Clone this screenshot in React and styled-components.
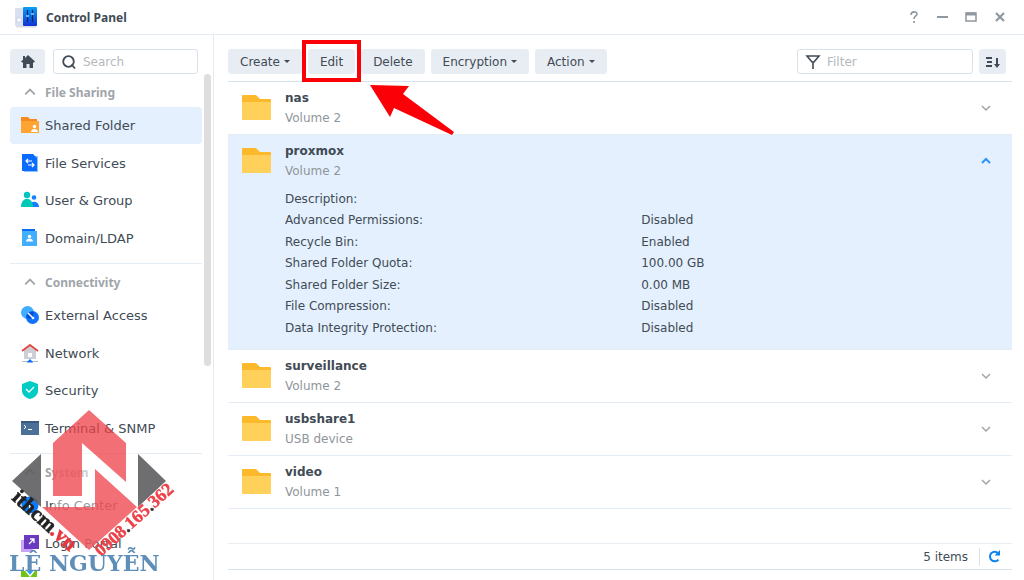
import React, { useState } from 'react';
import styled, { createGlobalStyle, css } from 'styled-components';

const GlobalStyle = createGlobalStyle`
    * { box-sizing: border-box; }
    html, body, #root { height: 100%; margin: 0; }
    body {
        font-family: Verdana, 'DejaVu Sans', sans-serif;
        font-size: 13px;
        color: #414b55;
        background: #fff;
        overflow: hidden;
    }
    button, input { font: inherit; color: inherit; }
`;

const Window = styled.div`
    display: flex;
    flex-direction: column;
    height: 100vh;
`;

const TitleBar = styled.header`
    display: flex;
    align-items: center;
    gap: 8px;
    height: 35px;
    padding: 0 16px 0 14px;
    border-bottom: 1px solid #e4edf5;
`;

const Title = styled.h1`
    flex: 1;
    margin: 0;
    font-family: 'Noto Sans', sans-serif;
    font-size: 12px;
    font-weight: bold;
`;

const WindowButton = styled.button`
    display: flex;
    justify-content: center;
    width: 16px;
    margin-left: 5px;
    padding: 0;
    border: 0;
    background: none;
`;

const Body = styled.div`
    display: flex;
    flex: 1;
    min-height: 0;
`;

const Sidebar = styled.nav`
    display: flex;
    flex-direction: column;
    width: 214px;
    flex-shrink: 0;
    border-right: 1px solid #e4e9f2;
    padding: 14px 2px 3px 10px;
`;

const SidebarTop = styled.div`
    display: flex;
    gap: 8px;
    padding-right: 13px;
`;

const iconButton = css`
    display: flex;
    align-items: center;
    justify-content: center;
    height: 25px;
    padding: 0;
    border: 0;
    border-radius: 3px;
    background: #e8edf4;
`;

const HomeButton = styled.button`
    ${iconButton}
    width: 35px;
`;

const SortButton = styled.button`
    ${iconButton}
    width: 27px;
`;

const SearchBox = styled.label`
    display: flex;
    align-items: center;
    flex: ${props => props.$width ? 'none' : '1'};
    width: ${props => props.$width || 'auto'};
    min-width: 0;
    gap: 6px;
    height: 25px;
    padding: 0 7px;
    border: 1px solid #d8e2ec;
    border-radius: 3px;
`;

const SearchInput = styled.input`
    flex: 1;
    width: 100%;
    min-width: 0;
    padding: 0;
    border: 0;
    outline: 0;
    background: none;
    font-size: 12px;
    &::placeholder { color: #b4b9be; opacity: 1; }
`;

const SidebarScroll = styled.div`
    display: flex;
    flex: 1;
    min-height: 0;
    gap: 2px;
    overflow: hidden;
`;

const Groups = styled.div`
    flex: 1;
`;

const ScrollThumb = styled.div`
    width: 7px;
    height: 292px;
    border-radius: 4px;
    background: #dedede;
`;

const Group = styled.section`
    padding-bottom: 6px;
    & + & { border-top: 1px solid #e4edf5; }
    & + & > h2 { padding-top: 3px; }
`;

const GroupTitle = styled.h2`
    display: flex;
    align-items: center;
    gap: 9px;
    height: 33px;
    margin: 0;
    padding: 3px 0 0 14px;
    font-family: 'Noto Sans', sans-serif;
    font-size: 12px;
    color: #a0a5aa;
`;

const GroupList = styled.ul`
    display: grid;
    grid-template-rows: repeat(4, 1fr);
    height: 150px;
    margin: 0;
    padding: 0;
    list-style: none;
`;

const NavLink = styled.a`
    display: flex;
    align-items: center;
    gap: 5px;
    height: 37px;
    padding-left: 10px;
    border-radius: 4px;
    font-size: 13px;
    color: inherit;
    text-decoration: none;
    background: ${props => props.$active ? '#e4f0fd' : 'none'};
`;

const Content = styled.main`
    display: flex;
    flex: 1;
    flex-direction: column;
    min-width: 0;
    padding: 14px 12px 10px 14px;
`;

const Toolbar = styled.div`
    display: flex;
    align-items: flex-start;
    gap: 6px;
    height: 32px;
    padding-right: 6px;
`;

const ToolButton = styled.button`
    display: flex;
    align-items: center;
    gap: 4px;
    height: 25px;
    padding: 0 12px;
    border: 0;
    border-radius: 3px;
    background: #e8edf4;
    font-size: 12px;
`;

const Spacer = styled.div`
    flex: 1;
`;

const Highlight = styled.div`
    position: relative;
    display: flex;
    &::after {
        content: '';
        position: absolute;
        inset: -9px -6px -8px -6px;
        border: 4px solid #fb0007;
    }
`;

const Pointer = styled.svg`
    position: absolute;
    z-index: 1;
    top: 35px;
    left: 61px;
`;

const FolderList = styled.ul`
    flex: 1;
    margin: 0;
    padding: 0;
    list-style: none;
`;

const FolderItem = styled.li`
    border-top: 1px solid #e4edf5;
    background: ${props => props.$open ? '#e4f0fd' : 'none'};
    &:first-child { border-color: #d8e2ec; }
    &:last-child { border-bottom: 1px solid #e4edf5; }
`;

const FolderHead = styled.div`
    display: flex;
    align-items: center;
    height: 52px;
    padding: 0 21px 0 14px;
`;

const FolderText = styled.div`
    flex: 1;
    padding-left: 13px;
    line-height: 20px;
    font-size: 12px;
`;

const FolderName = styled.div`
    font-weight: bold;
`;

const FolderPlace = styled.div`
    color: #8f959b;
`;

const ToggleButton = styled.button`
    display: flex;
    padding: 0;
    border: 0;
    background: none;
`;

const Details = styled.dl`
    display: grid;
    grid-template-columns: 49% 1fr;
    grid-auto-rows: 1fr;
    height: 162px;
    margin: 0;
    padding: 2px 0 10px 57px;
    font-size: 12px;
    line-height: 21px;
    dt, dd { margin: 0; }
`;

const StatusBar = styled.footer`
    display: flex;
    align-items: center;
    justify-content: flex-end;
    gap: 11px;
    height: 27px;
    padding-right: 11px;
    border-top: 1px solid #e9eef3;
    border-bottom: 1px solid #d8e2ec;
    font-size: 12px;
`;

const RefreshButton = styled.button`
    display: flex;
    align-items: center;
    height: 18px;
    padding: 0 0 0 8px;
    border: 0;
    border-left: 1px solid #d8e2ec;
    background: none;
`;

const Watermark = styled.svg`
    position: fixed;
    left: 0;
    bottom: 0;
    pointer-events: none;
`;

const Chevron = ({ up, color = '#a0a5aa', strokeWidth = 1.5, size = 10 }) => (
    <svg width={size} height={size} viewBox="0 0 10 10" fill="none" stroke={color} strokeWidth={strokeWidth}>
      <path d={up ? 'M1 7l4-4 4 4' : 'M1 3l4 4 4-4'}/>
    </svg>
);

const Caret = () => (
    <svg width="6" height="4" viewBox="0 0 6 4"><path d="M0 0h6L3 3z" fill="#414b55"/></svg>
);

const Folder = () => (
    <svg width="30" height="26" viewBox="0 0 30 26">
      <path d="M1 0h13l4 4h10a1 1 0 0 1 1 1v8H0V1a1 1 0 0 1 1-1z" fill="#fdb92c"/>
      <path d="M0 7h29v17a1 1 0 0 1-1 1H1a1 1 0 0 1-1-1z" fill="#ffd05a"/>
    </svg>
);

const PanelLogo = () => (
    <svg width="24" height="22" viewBox="0 0 24 22">
      <defs>
        <linearGradient id="panel" x1="0" y1="0" x2="0" y2="1">
          <stop offset="0" stopColor="#0aa0f5"/><stop offset="1" stopColor="#1233d6"/>
        </linearGradient>
      </defs>
      <path d="M2 20h20v1.500H2z" fill="#b9bdc9" fillOpacity=".5"/>
      <rect x="1" y="2" width="10" height="18" rx="1" fill="#dbe0f1"/>
      <circle cx="5" cy="14" r="2.500" fill="#f8f9ff" stroke="#b4bde0" strokeWidth=".6"/>
      <rect x="9" y="1" width="14" height="19" rx="1" fill="url(#panel)"/>
      <path d="M13.500 4v12M18.500 4v12" stroke="#10265f" strokeWidth="1.200"/>
      <path d="M12 10h3M17 8h3" stroke="#5cb8ff" strokeWidth="2"/>
    </svg>
);

const icons = {
    shared: (
        <>
          <path d="M0 1h7l2 2h7v14H0z" fill="#f58a1f"/>
          <path d="M0 5h18v12H0z" fill="#ffa333"/>
          <circle cx="13.500" cy="10.500" r="1.700" fill="#fff"/>
          <path d="M10 16c0-4 7-4 7 0z" fill="#fff"/>
        </>
    ),
    services: (
        <>
          <path d="M3 2h14v16H3z" fill="#8cc4ff"/>
          <path d="M1 0h11l4 4v13H1z" fill="#0a6cff"/>
          <path d="M11 7H5M7 5L5 7l2 2M7 11h6M11 9l2 2-2 2" fill="none" stroke="#fff" strokeWidth="1.200"/>
        </>
    ),
    users: (
        <>
          <circle cx="13" cy="6.500" r="2.300" fill="#1280ff"/>
          <path d="M9 16v-2c1-5 9-4 9 2z" fill="#1280ff"/>
          <circle cx="6" cy="4" r="3.200" fill="#00c5be"/>
          <path d="M0 16c0-11 12-11 12 0z" fill="#00c9b8"/>
        </>
    ),
    domain: (
        <>
          <path d="M1 0h13v4H1z" fill="#0a6cff"/>
          <path d="M1 2h15v15H1z" fill="#42aefc"/>
          <circle cx="8.500" cy="7.500" r="1.700" fill="#fff"/>
          <path d="M5 12.500c0-4 7-4 7 0z" fill="#fff"/>
        </>
    ),
    external: (
        <>
          <circle cx="6.500" cy="6.500" r="6.500" fill="#41adff"/>
          <circle cx="11.500" cy="11.500" r="6.500" fill="#1074ff"/>
          <path d="M5 11a6.500 6.500 0 0 1 8-5 6.500 6.500 0 0 1-5 7z" fill="#0550d6"/>
          <path d="M7 7l5 5" stroke="#fff" strokeWidth="1.400"/>
          <circle cx="12" cy="12" r="1.300" fill="#fff"/>
        </>
    ),
    network: (
        <>
          <path d="M3 6l6-5 6 5v9H3z" fill="#ccd0d6"/>
          <path d="M1 7l8-6 8 6" fill="none" stroke="#e2473f" strokeWidth="1.800"/>
          <path d="M7 9h4v4H7z" fill="#fff"/>
          <path d="M1 17.500h16" stroke="#b9bfc7"/>
          <path d="M6 18.500c0-2 2-1 2-3h2c0 2 2 1 2 3z" fill="#0a6cff"/>
        </>
    ),
    security: (
        <>
          <path d="M9 0l8 3v7c0 4-4 7-8 8-4-1-8-4-8-8V3z" fill="#00cbc4"/>
          <path d="M5 8l3 3 5-5" fill="none" stroke="#fff" strokeWidth="1.300"/>
        </>
    ),
    terminal: (
        <>
          <path d="M0 2h18v14H0z" fill="#4b7199"/>
          <path d="M0 2h18v2H0z" fill="#3b5a80"/>
          <path d="M3 6l2 2-2 2M7 10.500h4" fill="none" stroke="#fff"/>
        </>
    ),
    info: (
        <>
          <circle cx="9" cy="9" r="8.500" fill="#0a7aff"/>
          <path d="M9 4.500v2M9 8v6" stroke="#fff" strokeWidth="2"/>
        </>
    ),
    login: (
        <>
          <path d="M0 6h12v12H0z" fill="#c9a4fa"/>
          <path d="M3 1h15v14H3z" fill="#6a3ac0"/>
          <path d="M8 10l5-5M9 5h4v4" fill="none" stroke="#fff" strokeWidth="1.300"/>
        </>
    ),
    regional: (
        <>
          <path d="M0 0h16v18H0z" fill="#70c413"/>
          <path d="M5 0l4 5 4-5" fill="#2d9df4" stroke="#fff" strokeWidth="1.400"/>
        </>
    ),
};

const groups = [
    { title: 'File Sharing', items: [
        ['shared', 'Shared Folder'], ['services', 'File Services'],
        ['users', 'User & Group'], ['domain', 'Domain/LDAP'],
    ] },
    { title: 'Connectivity', items: [
        ['external', 'External Access'], ['network', 'Network'],
        ['security', 'Security'], ['terminal', 'Terminal & SNMP'],
    ] },
    { title: 'System', items: [
        ['info', 'Info Center'], ['login', 'Login Portal'], ['regional', ''],
    ] },
];

const folders = [
    { name: 'nas', place: 'Volume 2' },
    { name: 'proxmox', place: 'Volume 2', details: [
        ['Description:', ''],
        ['Advanced Permissions:', 'Disabled'],
        ['Recycle Bin:', 'Enabled'],
        ['Shared Folder Quota:', '100.00 GB'],
        ['Shared Folder Size:', '0.00 MB'],
        ['File Compression:', 'Disabled'],
        ['Data Integrity Protection:', 'Disabled'],
    ] },
    { name: 'surveillance', place: 'Volume 2' },
    { name: 'usbshare1', place: 'USB device' },
    { name: 'video', place: 'Volume 1' },
];

const Header = () => (
    <TitleBar>
      <PanelLogo/>
      <Title>Control Panel</Title>
      <WindowButton aria-label="Help">
        <svg width="12" height="12" viewBox="0 0 12 12" fill="none" stroke="#8f979f" strokeWidth="1.600">
          <path d="M4 4c0-4 6-4 6-1 0 2-3 2-3 5M7 10v2"/>
        </svg>
      </WindowButton>
      <WindowButton aria-label="Minimize">
        <svg width="12" height="12" viewBox="0 0 12 12"><path d="M1 5h11v2H1z" fill="#8f979f"/></svg>
      </WindowButton>
      <WindowButton aria-label="Maximize">
        <svg width="12" height="12" viewBox="0 0 12 12" fill="none" stroke="#8f979f">
          <path d="M1 2h10v8H1z" strokeWidth="1.500"/><path d="M1 3h10" strokeWidth="3"/>
        </svg>
      </WindowButton>
      <WindowButton aria-label="Close">
        <svg width="12" height="12" viewBox="0 0 12 12" stroke="#8f979f" strokeWidth="2.200">
          <path d="M2 2l8 8M10 2l-8 8"/>
        </svg>
      </WindowButton>
    </TitleBar>
);

const SideNav = () => (
    <Sidebar>
      <SidebarTop>
        <HomeButton aria-label="Home">
          <svg width="16" height="14" viewBox="0 0 16 14" fill="#414b55">
            <path d="M8 0l7 6.500-1 1H13V13H9.500V9h-3v4H3V7.500H2l-1-1L3 4.700V1h2v2z"/>
          </svg>
        </HomeButton>
        <SearchBox>
          <svg width="16" height="16" viewBox="0 0 16 16" fill="none" stroke="#414b55" strokeWidth="1.800">
            <circle cx="7.500" cy="7.500" r="5.300"/><path d="M10.500 10.500l3.500 4"/>
          </svg>
          <SearchInput aria-label="Search" placeholder="Search"/>
        </SearchBox>
      </SidebarTop>
      <SidebarScroll>
        <Groups>
          {groups.map(group => (
              <Group key={group.title}>
                <GroupTitle><Chevron up size={12}/>{group.title}</GroupTitle>
                <GroupList>
                  {group.items.map(([icon, label]) => (
                      <li key={icon}>
                        <NavLink href={'#' + icon} $active={icon === 'shared'} aria-label={label || icon}>
                          <svg width="20" height="19" viewBox="-1 0 20 19">{icons[icon]}</svg>
                          {label}
                        </NavLink>
                      </li>
                  ))}
                </GroupList>
              </Group>
          ))}
        </Groups>
        <ScrollThumb/>
      </SidebarScroll>
    </Sidebar>
);

const FolderToolbar = () => (
    <Toolbar>
      <ToolButton>Create <Caret/></ToolButton>
      <Highlight>
        <ToolButton>Edit</ToolButton>
        <Pointer width="86" height="52" viewBox="0 0 86 52">
          <path d="M1 1l39 1-6 8 51 38-2 3-58-27-4 9z" fill="#fb0007"/>
        </Pointer>
      </Highlight>
      <ToolButton>Delete</ToolButton>
      <ToolButton>Encryption <Caret/></ToolButton>
      <ToolButton>Action <Caret/></ToolButton>
      <Spacer/>
      <SearchBox $width="176px">
        <svg width="16" height="16" viewBox="0 0 16 16" fill="none" stroke="#414b55" strokeWidth="1.600">
          <path d="M2 2h12L9 8H7zM8 8v7"/>
        </svg>
        <SearchInput aria-label="Filter" placeholder="Filter"/>
      </SearchBox>
      <SortButton aria-label="Sort">
        <svg width="16" height="14" viewBox="0 0 16 14" stroke="#414b55" strokeWidth="2" fill="none">
          <path d="M1 3h6M2 7h5M1 11h6M12 3v7"/><path d="M9 9h6l-3 4z" fill="#414b55" stroke="none"/>
        </svg>
      </SortButton>
    </Toolbar>
);

const App = () => {
    const [opened, setOpened] = useState('proxmox');
    return (
        <Window>
          <GlobalStyle/>
          <Header/>
          <Body>
            <SideNav/>
            <Content>
              <FolderToolbar/>
              <FolderList>
                {folders.map(({ name, place, details }) => {
                    const open = name === opened;
                    return (
                        <FolderItem key={name} $open={open}>
                          <FolderHead>
                            <Folder/>
                            <FolderText>
                              <FolderName>{name}</FolderName>
                              <FolderPlace>{place}</FolderPlace>
                            </FolderText>
                            <ToggleButton
                              aria-label={'Toggle ' + name}
                              onClick={() => setOpened(open ? null : name)}
                            >
                              <Chevron
                                up={open}
                                color={open ? '#2a94f4' : '#a0a5aa'}
                                strokeWidth={open ? 2 : 1.5}
                              />
                            </ToggleButton>
                          </FolderHead>
                          {open && details && (
                              <Details>
                                {details.map(([term, value]) => (
                                    <React.Fragment key={term}>
                                      <dt>{term}</dt>
                                      <dd>{value}</dd>
                                    </React.Fragment>
                                ))}
                              </Details>
                          )}
                        </FolderItem>
                    );
                })}
              </FolderList>
              <StatusBar>
                <span>5 items</span>
                <RefreshButton aria-label="Refresh">
                  <svg width="13" height="13" viewBox="0 0 13 13" fill="none" stroke="#0a84f0" strokeWidth="2">
                    <path d="M10.500 9.500A4.800 4.800 0 1 1 10.500 3.500"/>
                    <path d="M12 0v5.500H6.500z" fill="#0a84f0" stroke="none"/>
                  </svg>
                </RefreshButton>
              </StatusBar>
            </Content>
          </Body>
          <Watermark width="180" height="180" viewBox="0 400 180 180" fontFamily="'Liberation Serif', serif" fontWeight="bold">
            <path d="M53 443h29l44 39v-39l40 38-77 69-77-69 29-27v53h12z" fill="#fff" fillOpacity=".45"/>
            <path d="M89 410l37 33v39L82 443v53H53v-53z" fill="#ee4047" fillOpacity=".75"/>
            <path d="M95 469l42 38-48 43-47-43h53z" fill="#ee4047" fillOpacity=".75"/>
            <path d="M41 454v53l-29-26zM138 454v53l28-26z" fill="#4a4a4c" fillOpacity=".8"/>
            <text transform="translate(11 499) rotate(42)" fontSize="21" fill="#222" stroke="#222" strokeWidth=".6">
              ithcm<tspan fill="#e8343c" stroke="#e8343c">.vn</tspan>
            </text>
            <text transform="translate(101 557) rotate(-42)" fontSize="18" fill="#ee4047" stroke="#ee4047" strokeWidth=".4">
              0908<tspan fill="#333" stroke="#333">.</tspan>165<tspan fill="#333" stroke="#333">.</tspan>362
            </text>
            <text x="9" y="571" fontFamily="'DejaVu Serif', serif" fontSize="22" fill="#5f8fb8">LÊ NGUYỄN</text>
          </Watermark>
        </Window>
    );
};

export default App;
